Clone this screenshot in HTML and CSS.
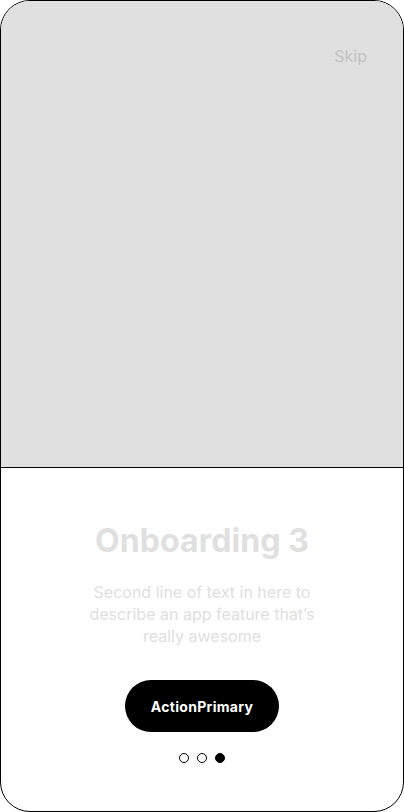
FILE: index.html
```html
<!DOCTYPE html>
<html>
<head>
<meta charset="utf-8">
<link rel="stylesheet" href="styles.css">
</head>
<body>
<div class="frame">
  <div class="hero">
    <div class="top-bar"><span class="skip">Skip</span></div>
  </div>
  <div class="content">
    <h1 class="title">Onboarding 3</h1>
    <p class="subtitle">Second line of text in here to describe an app feature that’s really awesome</p>
    <button class="primary">ActionPrimary</button>
    <div class="dots">
      <span class="dot"></span>
      <span class="dot"></span>
      <span class="dot active"></span>
    </div>
  </div>
</div>
</body>
</html>
```
FILE: styles.css
```css
* { box-sizing: border-box; }
html, body { margin: 0; padding: 0; background: #fff; }
body { font-family: Inter, "Noto Sans", sans-serif; }
.frame {
  width: 404px;
  height: 812px;
  border: 1px solid #000;
  border-radius: 30px;
  overflow: hidden;
  display: flex;
  flex-direction: column;
}
.hero {
  height: 467px;
  background: #e0e0e0;
  border-bottom: 1px solid #000;
  flex: none;
}
.top-bar {
  display: flex;
  justify-content: flex-end;
  padding: 44px 36px 0 0;
}
.skip {
  font-size: 16px;
  line-height: 22px;
  color: #c2c2c2;
}
.content {
  flex: 1;
  display: flex;
  flex-direction: column;
  align-items: center;
  padding-top: 53px;
}
.title {
  margin: 0;
  font-size: 32px;
  line-height: 40px;
  font-weight: 700;
  color: #e0e0e0;
  letter-spacing: 0.1px;
}
.subtitle {
  margin: 20px 0 0;
  width: 240px;
  text-align: center;
  font-size: 16px;
  line-height: 22px;
  color: #e0e0e0;
}
.primary {
  margin-top: 33px;
  width: 154px;
  height: 52px;
  border: none;
  border-radius: 26px;
  background: #000;
  color: #fff;
  font-family: Inter, "Noto Sans", sans-serif;
  font-size: 14px;
  font-weight: 700;
  letter-spacing: 0.3px;
}
.dots {
  margin-top: 21px;
  display: flex;
  gap: 8px;
}
.dot {
  width: 10px;
  height: 10px;
  border: 1px solid #000;
  border-radius: 50%;
}
.dot.active { background: #000; }
```
